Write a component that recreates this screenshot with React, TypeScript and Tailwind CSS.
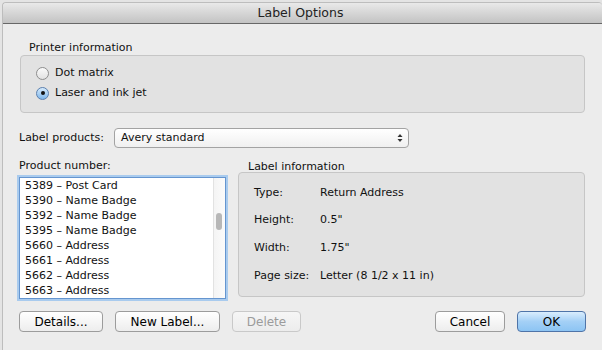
import React from "react";

const products = [
  "5389 – Post Card",
  "5390 – Name Badge",
  "5392 – Name Badge",
  "5395 – Name Badge",
  "5660 – Address",
  "5661 – Address",
  "5662 – Address",
  "5663 – Address",
];

const info = [
  ["Type:", "Return Address"],
  ["Height:", '0.5"'],
  ["Width:", '1.75"'],
  ["Page size:", "Letter (8 1/2 x 11 in)"],
];

function Radio({ checked, label }: { checked?: boolean; label: string }) {
  return (
    <div className="flex items-center h-[20px]">
      {checked ? (
        <span className="flex items-center justify-center w-[13px] h-[13px] rounded-full border border-[#5a7fae] bg-gradient-to-b from-[#d6ebfc] to-[#7eb6ea]">
          <span className="w-[4px] h-[4px] rounded-full bg-[#111]" />
        </span>
      ) : (
        <span className="w-[13px] h-[13px] rounded-full border border-[#8e8e8e] bg-gradient-to-b from-[#fafafa] to-[#e2e2e2]" />
      )}
      <span className="ml-[6px]">{label}</span>
    </div>
  );
}

function Button({
  label,
  width,
  kind,
}: {
  label: string;
  width: string;
  kind?: "default" | "disabled";
}) {
  const base = "h-[21px] rounded-[4px] flex items-center justify-center text-[12px] ";
  if (kind === "default")
    return (
      <button className={base + width + " border border-[#4f74a8] bg-gradient-to-b from-[#d9edfd] via-[#a4d0f6] to-[#8cc4f3] text-black"}>
        {label}
      </button>
    );
  if (kind === "disabled")
    return (
      <button className={base + width + " border border-[#c9c9c9] bg-gradient-to-b from-[#f6f6f6] to-[#ececec] text-[#9b9b9b]"}>
        {label}
      </button>
    );
  return (
    <button className={base + width + " border border-[#9c9c9c] bg-gradient-to-b from-[#ffffff] to-[#ededed] text-black"}>
      {label}
    </button>
  );
}

export default function App() {
  return (
    <div
      className="w-[602px] h-[350px] bg-[#e4e4e4] pt-[2px] pl-[2px] overflow-hidden text-[11px] text-[#111]"
      style={{ fontFamily: '"DejaVu Sans", "Liberation Sans", sans-serif' }}
    >
      <div className="w-[600px] h-[348px] rounded-t-[4px] border-l border-t border-[#bdbdbd] bg-[#ececec] flex flex-col">
        {/* title bar */}
        <div className="h-[21px] shrink-0 rounded-t-[4px] bg-gradient-to-b from-[#e9e9e9] to-[#c3c3c3] border-b border-[#676767] flex items-center justify-center">
          <span className="text-[12.5px] text-[#222] translate-x-[-2px]">Label Options</span>
        </div>

        <div className="pl-[16px] flex flex-col">
          {/* printer information */}
          <div className="mt-[16px] h-[14px] leading-[16px] pl-[10px]">Printer information</div>
          <div className="mt-[1px] ml-[1px] w-[565px] h-[58px] rounded-[4px] border border-[#c6c6c6] bg-[#e2e2e2] pt-[7px] pl-[15px]">
            <Radio label="Dot matrix" />
            <Radio checked label="Laser and ink jet" />
          </div>

          {/* label products */}
          <div className="mt-[15px] h-[20px] flex items-center">
            <span className="w-[95px] leading-[22px]">Label products:</span>
            <div className="w-[295px] h-[20px] rounded-[4px] border border-[#a3a3a3] bg-gradient-to-b from-[#ffffff] to-[#f0f0f0] flex items-center pl-[6px] pr-[5px]">
              <span className="flex-1 leading-[20px]">Avery standard</span>
              <svg width="6" height="10" viewBox="0 0 6 10">
                <path d="M0.5 4 L3 1 L5.5 4 Z" fill="#333" />
                <path d="M0.5 6 L3 9 L5.5 6 Z" fill="#333" />
              </svg>
            </div>
          </div>

          {/* columns */}
          <div className="mt-[9px] h-[142px] flex">
            <div className="w-[208px] flex flex-col">
              <div className="h-[14px] leading-[18px]">Product number:</div>
              <div className="mt-[6px] w-[207px] h-[122px] border border-[#6595cf] shadow-[0_0_0_2px_#a9cbee] bg-white flex">
                <div className="flex-1 flex flex-col pl-[5px]">
                  {products.map((p) => (
                    <div key={p} className="h-[15px] leading-[15px] whitespace-nowrap">
                      {p}
                    </div>
                  ))}
                </div>
                <div className="w-[12px] border-l border-[#e2e2e2] bg-gradient-to-r from-[#f4f4f4] to-[#fbfbfb] pt-[35px] pl-[2px]">
                  <div className="w-[6px] h-[17px] rounded-full bg-[#b7b7b7]" />
                </div>
              </div>
            </div>

            <div className="ml-[11px] w-[347px] flex flex-col">
              <div className="h-[14px] leading-[18px] pl-[10px] mt-[1px]">Label information</div>
              <div className="h-[125px] rounded-[4px] border border-[#c6c6c6] bg-[#e2e2e2] pt-[6px] pl-[15px]">
                {info.map(([k, v]) => (
                  <div key={k} className="h-[27.67px] flex items-center">
                    <span className="w-[66px]">{k}</span>
                    <span>{v}</span>
                  </div>
                ))}
              </div>
            </div>
          </div>

          {/* buttons */}
          <div className="mt-[12px] flex items-center">
            <Button label="Details..." width="w-[84px]" />
            <div className="ml-[12px]">
              <Button label="New Label..." width="w-[105px]" />
            </div>
            <div className="ml-[12px]">
              <Button label="Delete" width="w-[69px]" kind="disabled" />
            </div>
            <div className="ml-[134px]">
              <Button label="Cancel" width="w-[70px]" />
            </div>
            <div className="ml-[12px]">
              <Button label="OK" width="w-[69px]" kind="default" />
            </div>
          </div>
        </div>
      </div>
    </div>
  );
}
